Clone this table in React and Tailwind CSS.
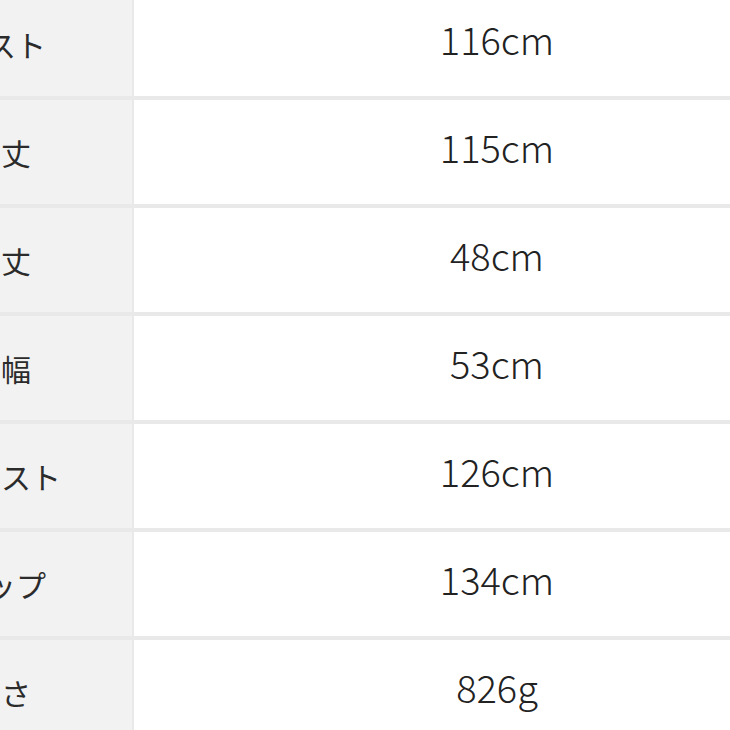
import React from 'react';

const rows = [
  { label: 'バスト', value: '116cm' },
  { label: '着丈', value: '115cm' },
  { label: '袖丈', value: '48cm' },
  { label: '肩幅', value: '53cm' },
  { label: 'ウエスト', value: '126cm' },
  { label: 'ヒップ', value: '134cm' },
  { label: '重さ', value: '826g' },
];

export default function App() {
  return (
    <div
      className="w-[730px] h-[730px] overflow-hidden bg-white"
      style={{ fontFamily: '"Noto Sans CJK JP", "Noto Sans", sans-serif' }}
    >
      {/* table is wider than the view; label column runs off the left edge */}
      <div className="grid grid-cols-[256px_726px] gap-x-[2px] gap-y-[4px] bg-[#e9e9e9] w-[984px] -ml-[124px] -mt-[8px]">
        {rows.map((r) => (
          <React.Fragment key={r.label}>
            <div className="h-[104px] bg-[#f2f2f2] flex items-center justify-center text-[30px] text-[#2b2b2b] pr-[6px]">
              {r.label}
            </div>
            <div className="h-[104px] bg-white flex items-center justify-center text-[38px] font-light text-[#222] pb-[12px]">
              {r.value}
            </div>
          </React.Fragment>
        ))}
      </div>
    </div>
  );
}
